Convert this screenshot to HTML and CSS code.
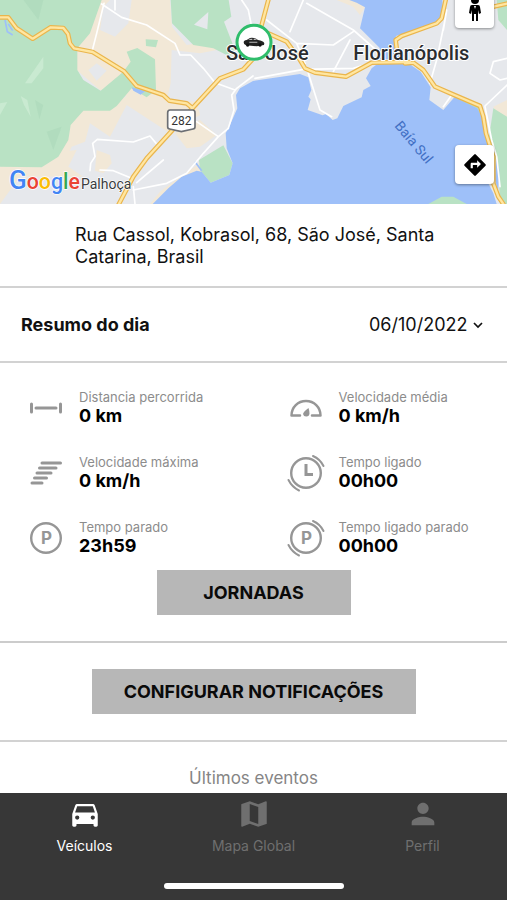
FILE: index.html
```html
<!DOCTYPE html>
<html lang="pt-BR">
<head>
<meta charset="utf-8">
<meta name="viewport" content="width=device-width, initial-scale=1">
<title>Veículos</title>
<link rel="stylesheet" href="styles.css">
</head>
<body>
<main class="content">
  <section class="map" aria-label="Mapa">
    <svg class="map-canvas" viewBox="0 0 1521 612" preserveAspectRatio="xMidYMid slice">
      <rect width="1521" height="612" fill="#e6e8ec"/>
      <!-- sand areas -->
      <g fill="#f2e8d7">
        <path d="M270 0H510L516 80L560 135L620 125L650 150L600 160L515 150L512 250L500 300L590 305L600 345L510 400L380 315L330 410L270 370L255 425L215 440L195 480L130 510L0 505V612H0V500L180 460L215 360L250 320L380 290L300 270L230 210V140Z"/>
        <path d="M0 500L130 500L185 455L230 450L205 500L250 530H60L0 612Z"/>
        <path d="M525 400L600 360L650 405L600 440L560 445Z"/>
        <path d="M290 450L330 465L335 490L310 520L285 512Z"/>
        <path d="M610 480L585 500L540 530L480 575L450 612H500L610 515Z"/>
        <path d="M1010 0H1070L1095 20L1080 45L1060 20Z"/>
        <path d="M1480 320L1521 300V350H1490Z"/>
      </g>
      <path d="M330 0H395L385 70L345 110L300 90L310 20ZM265 210L290 190L320 212L290 242Z" fill="#e6e8ec"/>
      <!-- green areas -->
      <g fill="#b9e2c4">
        <path d="M0 0H305L270 100L232 145V210L250 240L302 272L370 215L392 185L380 155L412 144L465 178L468 270L440 292L395 265L350 318L330 332L250 332L212 375L205 420L175 470L125 502L0 500Z"/>
        <path d="M512 0H686L694 50L672 65L705 150L690 170L640 145L580 135L516 70Z"/>
        <path d="M437 118L474 120L468 142L438 138Z"/>
        <path d="M597 480L670 436L698 490L688 525L632 548L600 510Z"/>
        <path d="M1490 0H1521V90L1495 60Z"/>
        <path d="M1480 325L1521 350V612H1500L1495 500L1465 425Z"/>
        <path d="M1360 290L1440 310L1460 400L1425 340Z"/>
      </g>
      <path d="M130 170L75 250H95L130 205ZM62 288L82 300L92 350L72 315ZM0 310L22 306L0 345Z" fill="#c9ead1"/>
      <path d="M105 300L130 315L118 358ZM70 0H130L115 60ZM140 395L185 380L160 450Z" fill="#abd8ba" opacity=".6"/>
      <path d="M582 74L625 36L622 88Z" fill="#e6e8ec"/>
      <!-- water -->
      <g fill="#9ec0f9">
        <path d="M759 243L900 222L925 232L934 270L925 290L932 298L923 330L968 346L978 342L998 360L1012 355L1030 318L1085 292L1090 270L1112 258L1098 235L1115 205L1135 190H1225L1262 215L1292 262L1288 300L1330 330L1363 292L1432 325L1445 350L1463 430L1460 540L1480 580L1490 612H458L505 565L545 530L590 512L605 515L632 548L688 525L698 490L680 445L677 400L690 375L712 325L708 285L720 265Z"/>
        <path d="M1048 0H1327L1330 45L1310 72L1188 108L1182 140L1215 168L1190 178H1125L1140 145L1080 85L1095 22L1070 8Z"/>
        <path d="M395 262L435 274L422 284L400 272ZM1488 470L1498 510L1494 580L1486 540Z"/>
      </g>
      <path d="M1285 612L1325 590H1360L1400 612Z" fill="#b9e2c4"/>
      <path d="M15 60L22 95L38 105M25 72L38 92M585 485L605 512" fill="none" stroke="#9ec0f9" stroke-width="5"/>
      <!-- minor roads -->
      <g fill="none" stroke="#fff" stroke-width="5" stroke-linejoin="round" stroke-linecap="round">
        <path d="M312 10L290 100L276 155M305 12L365 52L440 75L525 130L540 165H572L610 205L645 248L705 270"/>
        <path d="M725 0L745 30L755 80M270 512L272 490L285 470L278 430L292 418L400 426L450 408L468 430M300 510L340 512L395 535M490 480L410 548M400 570L500 550L560 520L610 460L655 410M590 365L655 410L685 385"/>
        <path d="M759 228L710 265L695 285L702 330L685 385M345 0V30M400 560L405 612"/>
        <path d="M765 235L910 208L1060 205L1110 190L1190 188M800 60L890 130L915 190M910 0L870 95M920 10L1060 90L1140 160M890 130L1000 135L1060 95M925 220L960 330L995 350M1050 120L1000 215"/>
        <path d="M1335 60L1310 180L1290 250M1340 30L1330 90M1521 175L1480 185L1470 220L1500 240L1521 235M1455 318L1521 255M1455 320L1475 420L1490 470L1500 560M1305 260L1355 285L1330 320"/>
      </g>
      <!-- highways -->
      <g fill="none" stroke-linejoin="round" stroke-linecap="round">
        <g stroke="#eab54c" stroke-width="14">
          <path d="M-5 52H25L50 85L98 116L152 82L190 84L204 102L210 130L222 145L278 156L372 214L410 258L490 285L508 302L560 310L577 324"/>
          <path d="M355 615L400 530L440 475L577 325L660 235L730 208L765 170M785 75L805 0M800 98L860 125L900 180L915 205L945 218L1038 230L1115 188L1230 186"/>
          <path d="M1215 190L1240 188L1270 210L1305 260L1370 288L1440 318L1450 350L1458 400L1480 470V550L1495 590L1510 612M1190 145L1187 120L1205 108L1310 70L1325 55L1337 0M1480 20L1525 10"/>
        </g>
        <g stroke="#ffe6a1" stroke-width="7">
          <path d="M-5 52H25L50 85L98 116L152 82L190 84L204 102L210 130L222 145L278 156L372 214L410 258L490 285L508 302L560 310L577 324"/>
          <path d="M355 615L400 530L440 475L577 325L660 235L730 208L765 170M785 75L805 0M800 98L860 125L900 180L915 205L945 218L1038 230L1115 188L1230 186"/>
          <path d="M1215 190L1240 188L1270 210L1305 260L1370 288L1440 318L1450 350L1458 400L1480 470V550L1495 590L1510 612M1190 145L1187 120L1205 108L1310 70L1325 55L1337 0M1480 20L1525 10"/>
        </g>
      </g>
      <path d="M510 330H578Q585 330 585 338V380Q585 386 579 387L544 395L509 387Q503 386 503 380V338Q503 330 510 330Z" fill="#fff" stroke="#6b6e73" stroke-width="5"/>
      <text class="road-number" x="544" y="375">282</text>
      <text class="place" x="678" y="179">São José</text>
      <text class="place" x="1060" y="179">Florianópolis</text>
      <text class="town" x="243" y="567">Palhoça</text>
      <text class="bay" transform="translate(1182 378) rotate(50)">Baía Sul</text>
      <text class="logo" x="27" y="567"><tspan class="logo-initial" fill="#4285f4">G</tspan><tspan fill="#ea4335">o</tspan><tspan fill="#fbbc05">o</tspan><tspan fill="#4285f4">g</tspan><tspan fill="#34a853">l</tspan><tspan fill="#ea4335">e</tspan></text>
      <!-- vehicle marker -->
      <circle cx="762" cy="127" r="51" fill="#fff" stroke="#2fbd6b" stroke-width="9"/>
      <path d="M731 127Q731 121 740 120L750 114Q764 112 774 120Q790 122 793 130L792 135L770 139L738 136Q731 135 731 127Z" fill="#222"/>
      <path d="M744 120L752 116H757V120ZM761 116Q768 116 772 120H761ZM748 125H772V128H748Z" fill="#bbb"/>
      <circle cx="743" cy="135" r="5" fill="#111"/><circle cx="780" cy="135" r="5" fill="#111"/>
    </svg>
    <button class="map-button map-button-person" aria-label="Street View">
      <svg width="14" height="26" viewBox="0 0 14 26"><circle cx="7" cy="4" r="4"/><path d="M4 9H10Q12 9 12 11L13 17L11 18L10 14V25H8V18H6V25H4V14L3 18L1 17L2 11Q2 9 4 9Z"/><path d="M6 10L7 13L8 10Z" fill="#fff"/></svg>
    </button>
    <button class="map-button map-button-route" aria-label="Rotas">
      <svg width="26" height="26" viewBox="0 0 24 24"><path d="M21.71 11.29l-9-9a1 1 0 0 0-1.41 0l-9 9a1 1 0 0 0 0 1.41l9 9a1 1 0 0 0 1.41 0l9-9a1 1 0 0 0 0-1.41zM14 14.5V12h-4v3H8v-4c0-.55.45-1 1-1h5V7.5l3.5 3.5-3.5 3.5z"/></svg>
    </button>
  </section>

  <address class="address">Rua Cassol, Kobrasol, 68, São José, Santa Catarina, Brasil</address>

  <section class="day">
    <h2 class="day-title"><label for="date">Resumo do dia</label></h2>
    <div class="date">
      <select class="date-select" id="date"><option>06/10/2022</option></select>
      <svg class="date-arrow" width="10" height="8" viewBox="0 0 10 8"><path d="M1 2L5 6L9 2" fill="none" stroke="#111" stroke-width="1.7"/></svg>
    </div>
  </section>

  <section class="summary">
    <dl class="stats">
      <div class="stat">
        <svg class="stat-icon" viewBox="0 0 40 40"><path d="M5.5 16v8M34.5 16v8" stroke-width="3"/><path d="M10 20H30" stroke-width="3"/></svg>
        <div><dt>Distancia percorrida</dt><dd>0 km</dd></div>
      </div>
      <div class="stat">
        <svg class="stat-icon" viewBox="0 0 40 40"><path d="M14 27.5H5.500C5.500 19 12 13 20 13S34.500 19 34.500 27.500H26" stroke-width="2.5"/><path class="solid" d="M22.500 20Q23.500 23 23.500 25.500A3.300 3.300 0 0 1 17 26Q17.500 23.500 22.500 20Z"/></svg>
        <div><dt>Velocidade média</dt><dd>0 km/h</dd></div>
      </div>
      <div class="stat">
        <svg class="stat-icon" viewBox="0 0 40 40"><path d="M16 10H34.500M13.500 15H30M11 20H25M8.500 25H20.500M6 30H16" stroke-width="3"/></svg>
        <div><dt>Velocidade máxima</dt><dd>0 km/h</dd></div>
      </div>
      <div class="stat">
        <svg class="stat-icon" viewBox="0 0 40 40"><circle cx="20" cy="20" r="14.800" stroke-width="2.400"/><path class="hands" d="M20 11V21.500H27"/><path d="M27 3Q34 6 37.500 13M2.500 27Q6 34 13 37.500" stroke-width="2"/></svg>
        <div><dt>Tempo ligado</dt><dd>00h00</dd></div>
      </div>
      <div class="stat">
        <svg class="stat-icon" viewBox="0 0 40 40"><circle cx="20" cy="20" r="14.800" stroke-width="2.400"/><text x="20.500" y="26">P</text></svg>
        <div><dt>Tempo parado</dt><dd>23h59</dd></div>
      </div>
      <div class="stat">
        <svg class="stat-icon" viewBox="0 0 40 40"><circle cx="20" cy="20" r="14.800" stroke-width="2.400"/><text x="20.500" y="26">P</text><path d="M27 3Q34 6 37.500 13M2.500 27Q6 34 13 37.500" stroke-width="2"/></svg>
        <div><dt>Tempo ligado parado</dt><dd>00h00</dd></div>
      </div>
    </dl>
    <button class="action action-small">JORNADAS</button>
  </section>

  <section class="notifications">
    <button class="action action-large">CONFIGURAR NOTIFICAÇÕES</button>
  </section>

  <h3 class="events-title">Últimos eventos</h3>
</main>

<nav class="tabbar">
  <div class="tabs">
    <a class="tab tab-active" href="#veiculos">
      <svg class="tab-icon" viewBox="0 0 24 24"><path d="M18.920 6.010C18.720 5.420 18.160 5 17.500 5h-11c-.66 0-1.210.42-1.420 1.010L3 12v8c0 .55.45 1 1 1h1c.55 0 1-.45 1-1v-1h12v1c0 .55.45 1 1 1h1c.55 0 1-.45 1-1v-8l-2.080-5.990zM6.500 16a1.500 1.500 0 1 1 0-3 1.500 1.500 0 0 1 0 3zm11 0a1.500 1.500 0 1 1 0-3 1.500 1.500 0 0 1 0 3zM5 11l1.500-4.500h11L19 11H5z"/></svg>
      Veículos
    </a>
    <a class="tab" href="#mapa">
      <svg class="tab-icon" viewBox="0 0 24 24"><path d="M20.500 3l-.16.03L15 5.100 9 3 3.360 4.900c-.21.07-.36.25-.36.48V20.500c0 .28.22.5.5.5l.16-.03L9 18.900l6 2.100 5.640-1.900c.21-.07.36-.25.36-.48V3.500c0-.28-.22-.5-.5-.5zM15 19l-6-2.110V5l6 2.110V19z"/></svg>
      Mapa Global
    </a>
    <a class="tab" href="#perfil">
      <svg class="tab-icon" viewBox="0 0 24 24"><path d="M12 12c2.210 0 4-1.790 4-4s-1.790-4-4-4-4 1.790-4 4 1.790 4 4 4zm0 2c-2.670 0-8 1.340-8 4v2h16v-2c0-2.660-5.330-4-8-4z"/></svg>
      Perfil
    </a>
  </div>
  <div class="home-indicator"></div>
</nav>
</body>
</html>
```
FILE: styles.css
```css
* {
  box-sizing: border-box;
}

body {
  margin: 0;
  min-height: 100vh;
  display: flex;
  flex-direction: column;
  background: #fff;
  color: #111;
  font-family: Inter, "Liberation Sans", sans-serif;
}

button,
select {
  border: 0;
  border-radius: 0;
  margin: 0;
  padding: 0;
  color: inherit;
  font: inherit;
}

.content {
  flex: 1;
}

.map {
  position: relative;
  overflow: hidden;
  aspect-ratio: 507 / 204;
}

.map-canvas {
  display: block;
  width: 100%;
  height: 100%;
}

.map-canvas text {
  font-family: Roboto, sans-serif;
  paint-order: stroke;
  stroke-linejoin: round;
}

.map-canvas .place {
  font-size: 60px;
  font-weight: 500;
  fill: #2b2d30;
  stroke: #fff;
  stroke-width: 6px;
}

.map-canvas .town {
  font-size: 42px;
  fill: #3a3c40;
  stroke: #fff;
  stroke-width: 4px;
}

.map-canvas .road-number {
  font-size: 36px;
  fill: #333;
  text-anchor: middle;
}

.map-canvas .bay {
  font-size: 42px;
  fill: #416fc4;
}

.map-canvas .logo {
  font-size: 64px;
  font-weight: 500;
  stroke: #fff;
  stroke-width: 4px;
}

.map-canvas .logo-initial {
  font-size: 78px;
}

.map-button {
  position: absolute;
  right: 13px;
  width: 39px;
  height: 39px;
  display: flex;
  align-items: center;
  justify-content: center;
  border-radius: 4px;
  background: #fff;
  box-shadow: 0 1px 3px rgba(0, 0, 0, 0.4);
}

.map-button-person {
  top: -11px;
}

.map-button-route {
  bottom: 20px;
}

.address {
  padding: 20px 60px 18px 75px;
  border-bottom: 2px solid #d2d2d2;
  font-size: 18px;
  font-style: normal;
  line-height: 22px;
}

.day {
  display: flex;
  align-items: center;
  justify-content: space-between;
  padding: 26px 24px 25px 21px;
  border-bottom: 2px solid #d2d2d2;
  font-size: 18px;
  line-height: 22px;
}

.day-title {
  margin: 0;
  font-size: 18px;
  font-weight: 700;
}

.date {
  display: flex;
  align-items: center;
  gap: 5px;
}

.date-select {
  appearance: none;
  background: none;
}

.summary {
  display: flex;
  flex-direction: column;
  align-items: center;
  gap: 14px;
  padding: 26px 20px;
  border-bottom: 2px solid #cccccc;
}

.stats {
  width: 100%;
  margin: 0;
  display: grid;
  grid-template-columns: 1fr 1fr;
  gap: 28px 52px;
}

.stat {
  display: flex;
  align-items: center;
  gap: 13px;
  padding-left: 6px;
  height: 37px;
  white-space: nowrap;
}

.stat dt {
  color: #8c8c8c;
  font-size: 13px;
  line-height: 16px;
}

.stat dd {
  margin: 0;
  color: #000;
  font-size: 18px;
  font-weight: 700;
  line-height: 21px;
}

.stat-icon {
  flex: none;
  width: 40px;
  height: 40px;
  fill: none;
  stroke: #969696;
  stroke-linecap: round;
  stroke-linejoin: round;
}

.stat-icon .solid {
  fill: #969696;
  stroke: none;
}

.stat-icon .hands {
  stroke-width: 3px;
  stroke-linecap: butt;
  stroke-linejoin: miter;
}

.stat-icon text {
  fill: #969696;
  stroke: none;
  font-size: 17px;
  font-weight: 700;
  text-anchor: middle;
}

.action {
  max-width: 100%;
  padding: 12px 16px 11px;
  background: #b7b7b7;
  color: #0a0a0a;
  font-size: 18px;
  font-weight: 700;
  line-height: 22px;
}

.action-small {
  width: 194px;
}

.action-large {
  width: 324px;
}

.notifications {
  display: flex;
  justify-content: center;
  padding: 26px 20px;
  border-bottom: 2px solid #d2d2d2;
}

.events-title {
  margin: 0;
  padding: 25px 20px 3px;
  color: #858585;
  font-size: 17px;
  font-weight: 400;
  line-height: 22px;
  text-align: center;
}

.tabbar {
  padding: 4px 0 11px;
  background: #373737;
}

.tabs {
  display: grid;
  grid-template-columns: 1fr 1fr 1fr;
}

.tab {
  display: flex;
  flex-direction: column;
  align-items: center;
  gap: 6px;
  color: #6f6f6f;
  font-size: 14px;
  line-height: 18px;
  text-decoration: none;
}

.tab-active {
  color: #fff;
}

.tab-icon {
  width: 34px;
  height: 34px;
  fill: currentColor;
}

.home-indicator {
  width: 180px;
  height: 6px;
  margin: 28px auto 0;
  border-radius: 3px;
  background: #fff;
}
```
